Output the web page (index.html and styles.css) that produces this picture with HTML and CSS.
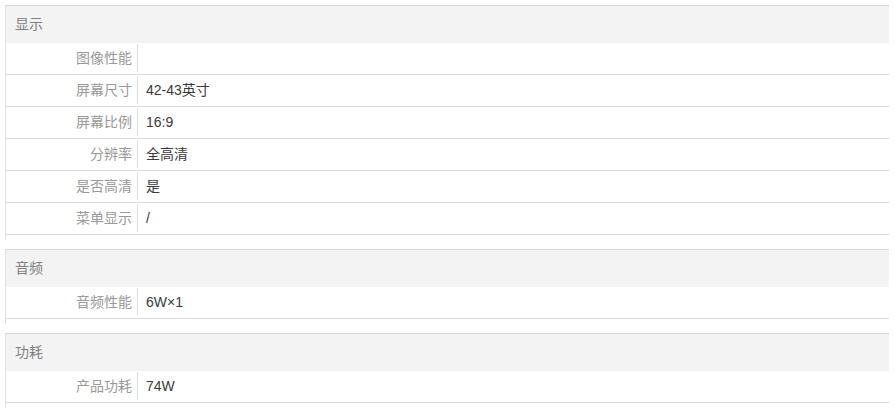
FILE: index.html
```html
<!DOCTYPE html>
<html lang="zh-CN">
<head>
<meta charset="utf-8">
<title>参数</title>
<link rel="stylesheet" href="styles.css">
</head>
<body>
<div class="specs">
  <section class="group">
    <h3 class="group-title">显示</h3>
    <dl class="row"><dt class="label">图像性能</dt><dd class="value"></dd></dl>
    <dl class="row"><dt class="label">屏幕尺寸</dt><dd class="value">42-43英寸</dd></dl>
    <dl class="row"><dt class="label">屏幕比例</dt><dd class="value">16:9</dd></dl>
    <dl class="row"><dt class="label">分辨率</dt><dd class="value">全高清</dd></dl>
    <dl class="row"><dt class="label">是否高清</dt><dd class="value">是</dd></dl>
    <dl class="row"><dt class="label">菜单显示</dt><dd class="value">/</dd></dl>
  </section>
  <section class="group">
    <h3 class="group-title">音频</h3>
    <dl class="row"><dt class="label">音频性能</dt><dd class="value">6W×1</dd></dl>
  </section>
  <section class="group">
    <h3 class="group-title">功耗</h3>
    <dl class="row"><dt class="label">产品功耗</dt><dd class="value">74W</dd></dl>
  </section>
</div>
</body>
</html>
```
FILE: styles.css
```css
html, body {
  margin: 0;
  padding: 0;
  background: #fff;
}
body {
  font-family: "Liberation Sans", "Noto Sans CJK SC", sans-serif;
  font-size: 14px;
}
.specs {
  padding: 5px 6px 0 5px;
}
.group {
  border-left: 1px solid #e0e0e0;
  border-top: 1px solid #d9d9d9;
  padding-bottom: 5px;
  margin-bottom: 9px;
}
.group-title {
  margin: 0;
  height: 37px;
  line-height: 37px;
  background: #f3f3f3;
  padding-left: 9px;
  font-size: 14px;
  font-weight: normal;
  color: #808080;
}
.row {
  display: flex;
  margin: 0;
  height: 31px;
  border-bottom: 1px solid #ddd;
}
.label {
  width: 126px;
  flex: none;
  margin: 1px 0 2px;
  padding-right: 5px;
  border-right: 1px solid #ddd;
  text-align: right;
  color: #999;
  line-height: 28px;
}
.value {
  margin: 0;
  padding-left: 8px;
  color: #3a3a3a;
  line-height: 30px;
}
```
